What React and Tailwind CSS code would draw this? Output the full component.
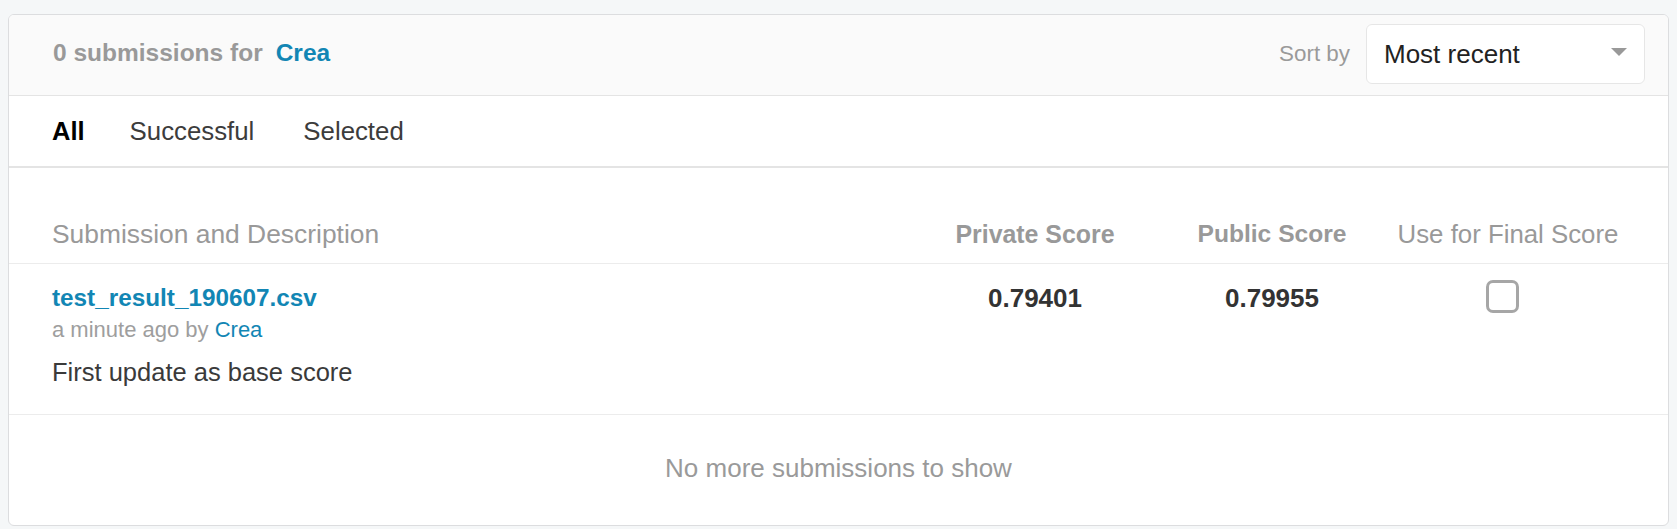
import React, { useState } from 'react';

const submissions = [
  {
    file: 'test_result_190607.csv',
    when: 'a minute ago',
    by: 'Crea',
    description: 'First update as base score',
    privateScore: '0.79401',
    publicScore: '0.79955',
  },
];

export default function App() {
  const [tab, setTab] = useState('All');
  const [selected, setSelected] = useState({});

  const tabs = [
    { name: 'All', cls: '' },
    { name: 'Successful', cls: 'ml-[45px]' },
    { name: 'Selected', cls: 'ml-[49px]' },
  ];

  return (
    <div className="min-h-[529px] bg-[#f5f7f8] pt-[14px] px-2 font-['Liberation_Sans',Arial,sans-serif]">
      <div className="bg-white border border-[#dcdddf] rounded-[6px] overflow-hidden">
        {/* header */}
        <div className="flex items-center justify-between bg-[#fafafa] border-b border-[#e4e4e4] pl-[44px] pr-[23px] pt-[9px] pb-[11px]">
          <h1 className="flex items-center text-[24.5px] leading-[30px] font-bold text-[#999999] -mt-[3px]">
            <span>0 submissions for</span>
            <a className="ml-[13px] text-[#1286b4]">Crea</a>
          </h1>
          <div className="flex items-center">
            <span className="text-[22.4px] text-[#9a9a9a] mr-[16px]">Sort by</span>
            <button className="relative w-[279px] h-[60px] bg-white border border-[#e6e6e6] rounded-[6px] text-left pl-[17px] text-[26px] text-[#222222]">
              Most recent
              <span className="absolute right-[17px] top-[23px] w-0 h-0 border-l-[8px] border-r-[8px] border-t-[8px] border-l-transparent border-r-transparent border-t-[#999999]"></span>
            </button>
          </div>
        </div>

        {/* tabs */}
        <div className="flex items-center h-[72px] border-b-2 border-[#e4e4e4] px-[43px]">
          {tabs.map(t => (
            <button
              key={t.name}
              onClick={() => setTab(t.name)}
              className={`${t.cls} ${tab === t.name ? 'text-[25.5px] font-bold text-black' : 'text-[25.8px] text-[#3c3c3c]'} leading-[32px]`}
            >
              {t.name}
            </button>
          ))}
        </div>

        {/* table head */}
        <div className="grid grid-cols-[1fr_248px_226px_240px] px-[43px] pt-[50px] pb-[13px] border-b border-[#ececec] text-[#999999] leading-[32px]">
          <div className="text-[26.4px]">Submission and Description</div>
          <div className="text-center text-[24.9px] font-bold">Private Score</div>
          <div className="text-center text-[24.6px] font-bold">Public Score</div>
          <div className="text-center text-[25.8px] pl-[6px]">Use for Final Score</div>
        </div>

        {/* rows */}
        {submissions.map((s, i) => (
          <div key={i} className="grid grid-cols-[1fr_248px_226px_240px] px-[43px] pt-[19px] pb-[26px] border-b border-[#ececec]">
            <div>
              <a className="block text-[24.3px] leading-[30px] font-bold text-[#1286b4]">{s.file}</a>
              <div className="mt-[3px] text-[22px] leading-[28px] text-[#9e9e9e]">
                {s.when} by <a className="text-[#1286b4]">{s.by}</a>
              </div>
              <p className="mt-[12px] text-[25.5px] leading-[32px] text-[#3a3a3a]">{s.description}</p>
            </div>
            <div className="text-center text-[26px] leading-[30px] font-bold text-[#333333]">{s.privateScore}</div>
            <div className="text-center text-[26px] leading-[30px] font-bold text-[#333333]">{s.publicScore}</div>
            <div className="flex justify-center -mt-[3px] pr-[6px]">
              <button
                onClick={() => setSelected({ ...selected, [i]: !selected[i] })}
                className={`w-[33px] h-[33px] rounded-[7px] border-[3px] ${selected[i] ? 'border-[#1286b4] bg-[#1286b4]' : 'border-[#a6a6a6] bg-white'}`}
              ></button>
            </div>
          </div>
        ))}

        {/* footer */}
        <div className="flex items-center justify-center h-[110px] pb-[4px] text-[26px] text-[#9a9a9a]">
          No more submissions to show
        </div>
      </div>
    </div>
  );
}
